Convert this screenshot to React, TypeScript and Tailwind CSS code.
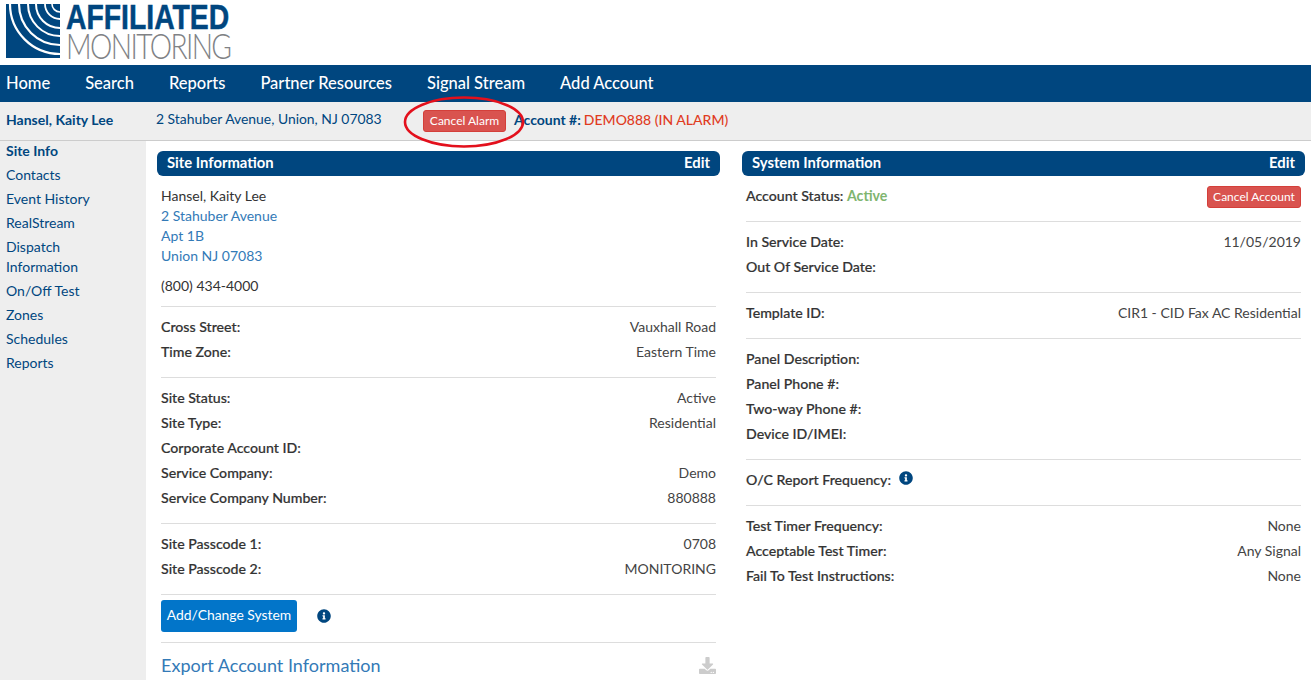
import { FaInfoCircle, FaDownload } from "react-icons/fa";

const Row = ({ k, v, icon }: { k: string; v?: string; icon?: boolean }) => (
  <div className="flex h-[25px] items-center justify-between pb-0.5">
    <span className="flex items-center text-[14.15px] font-medium text-[#333] [-webkit-text-stroke:0.2px_#333]">
      {k}
      {icon && <FaInfoCircle className="ml-[8px] -translate-y-px text-[14px] text-[#00467f]" />}
    </span>
    {v && <span className="text-[#444]">{v}</span>}
  </div>
);

const Hr = () => <div className="mt-3 mb-2 h-px bg-[#ddd]" />;

const Head = ({ title }: { title: string }) => (
  <div className="flex h-[25px] items-center justify-between rounded-md bg-[#00467f] px-2.5 pb-0.5 text-[14.8px] font-bold text-white">
    <span>{title}</span>
    <span>Edit</span>
  </div>
);

const Logo = () => (
  <svg width="54" height="54" viewBox="0 0 54 54" className="shrink-0">
    <rect width="54" height="54" fill="#00467f" />
    <g fill="none" stroke="#fff">
      <path d="M46 0 A8 8 0 0 0 54 8" strokeWidth="1.6" />
      <path d="M39 0 A15 15 0 0 0 54 15" strokeWidth="1.8" />
      <path d="M30 0 A24 24 0 0 0 54 24" strokeWidth="2" />
      <path d="M22 0 A32 32 0 0 0 54 32" strokeWidth="2" />
      <path d="M13 0 A41 41 0 0 0 54 41" strokeWidth="2.2" />
      <path d="M4 0 A50 50 0 0 0 54 50" strokeWidth="2.2" />
    </g>
  </svg>
);

export default function App() {
  return (
    <div className="relative flex h-[680px] flex-col overflow-hidden bg-white font-['Lato',sans-serif] text-[14px] text-[#333]">
      <header className="flex h-[65px] shrink-0 items-start gap-[6px] pl-[6px] pt-[4px]">
        <Logo />
        <div className="flex flex-col items-start">
          <span className="h-[25px] origin-left scale-x-[.81] whitespace-nowrap font-['Liberation_Sans',sans-serif] text-[35px] font-bold leading-[25px] text-[#00467f] [-webkit-text-stroke:0.5px_#00467f]">AFFILIATED</span>
          <span className="h-[33px] origin-left scale-x-[.806] whitespace-nowrap text-[35px] font-light leading-[33px] tracking-[-2px] text-[#808285]">MONITORING</span>
        </div>
      </header>

      <nav className="flex h-[37px] shrink-0 items-center gap-[35px] bg-[#00467f] pb-px pl-[6px] text-[16.5px] font-medium text-white">
        <a>Home</a>
        <a>Search</a>
        <a>Reports</a>
        <a>Partner Resources</a>
        <a>Signal Stream</a>
        <a>Add Account</a>
      </nav>

      <div className="relative flex h-[39px] shrink-0 items-center border-b border-[#ccc] bg-[#eee] pl-[6px]">
        <span className="mb-1 w-[150px] font-bold text-[#00467f]">Hansel, Kaity Lee</span>
        <span className="mb-[3px] w-[267px] text-[13.9px] text-[#00467f]">2 Stahuber Avenue, Union, NJ 07083</span>
        <button className="h-[22px] w-[83px] rounded-[3px] border border-[#d43f3a] bg-[#d9534f] text-[12px] text-white">Cancel Alarm</button>
        <span className="mb-1 ml-2 font-bold text-[#00467f]">Account #:</span>
        <span className="mb-1 ml-[3px] font-medium text-[#e03c1f]">DEMO888 (IN ALARM)</span>
        <svg width="122" height="54" viewBox="0 0 122 54" className="absolute left-[403px] top-[-7px]">
          <ellipse cx="61" cy="27" rx="59" ry="24.5" fill="none" stroke="#e3101c" strokeWidth="2.6" />
        </svg>
      </div>

      <div className="flex min-h-0 flex-1">
        <aside className="flex w-[146px] shrink-0 flex-col bg-[#eee] pl-[6px] pr-[20px] text-[#00467f]">
          {[
            ["Site Info", true],
            ["Contacts"],
            ["Event History"],
            ["RealStream"],
            ["Dispatch Information"],
            ["On/Off Test"],
            ["Zones"],
            ["Schedules"],
            ["Reports"],
          ].map(([t, b]) => (
            <a key={t as string} className={`mb-1 leading-5 ${b ? "font-bold" : ""}`}>{t}</a>
          ))}
        </aside>

        <main className="flex min-w-0 flex-1 gap-[22px] pl-[11px] pr-[6px] pt-[10px]">
          <section className="w-[563px] shrink-0">
            <Head title="Site Information" />
            <div className="px-1 pt-[10px]">
              <div className="leading-5">Hansel, Kaity Lee</div>
              <div className="leading-5 text-[#337ab7]">2 Stahuber Avenue</div>
              <div className="leading-5 text-[#337ab7]">Apt 1B</div>
              <div className="leading-5 text-[#337ab7]">Union NJ 07083</div>
              <div className="mt-[10px] leading-5">(800) 434-4000</div>
              <div className="mt-[10px] mb-2 h-px bg-[#ddd]" />
              <Row k="Cross Street:" v="Vauxhall Road" />
              <Row k="Time Zone:" v="Eastern Time" />
              <Hr />
              <Row k="Site Status:" v="Active" />
              <Row k="Site Type:" v="Residential" />
              <Row k="Corporate Account ID:" />
              <Row k="Service Company:" v="Demo" />
              <Row k="Service Company Number:" v="880888" />
              <Hr />
              <Row k="Site Passcode 1:" v="0708" />
              <Row k="Site Passcode 2:" v="MONITORING" />
              <div className="mt-3 h-px bg-[#ddd]" />
              <div className="flex items-center py-[5px]">
                <button className="h-[32px] w-[136px] rounded-[3px] bg-[#0275c9] pb-px text-[13.9px] text-white">Add/Change System</button>
                <FaInfoCircle className="ml-[20px] text-[14px] text-[#00467f]" />
              </div>
              <div className="mt-[5px] h-px bg-[#ddd]" />
              <div className="flex items-center justify-between pt-[9px]">
                <span className="text-[18.05px] leading-[26px] text-[#337ab7]">Export Account Information</span>
                <FaDownload className="text-[17px] text-[#ccc]" />
              </div>
            </div>
          </section>

          <section className="w-[563px] shrink-0">
            <Head title="System Information" />
            <div className="px-1 pt-2">
              <div className="flex h-[25px] items-center justify-between">
                <span className="mb-0.5 text-[14.15px] font-medium [-webkit-text-stroke:0.2px_#333]">
                  Account Status: <span className="font-bold text-[#7fb56f] [-webkit-text-stroke:0]">Active</span>
                </span>
                <button className="h-[22px] w-[94px] rounded-[3px] border border-[#d43f3a] bg-[#d9534f] text-[12px] text-white">Cancel Account</button>
              </div>
              <Hr />
              <Row k="In Service Date:" v="11/05/2019" />
              <Row k="Out Of Service Date:" />
              <Hr />
              <Row k="Template ID:" v="CIR1 - CID Fax AC Residential" />
              <Hr />
              <Row k="Panel Description:" />
              <Row k="Panel Phone #:" />
              <Row k="Two-way Phone #:" />
              <Row k="Device ID/IMEI:" />
              <Hr />
              <Row k="O/C Report Frequency:" icon />
              <Hr />
              <Row k="Test Timer Frequency:" v="None" />
              <Row k="Acceptable Test Timer:" v="Any Signal" />
              <Row k="Fail To Test Instructions:" v="None" />
            </div>
          </section>
        </main>
      </div>
    </div>
  );
}
